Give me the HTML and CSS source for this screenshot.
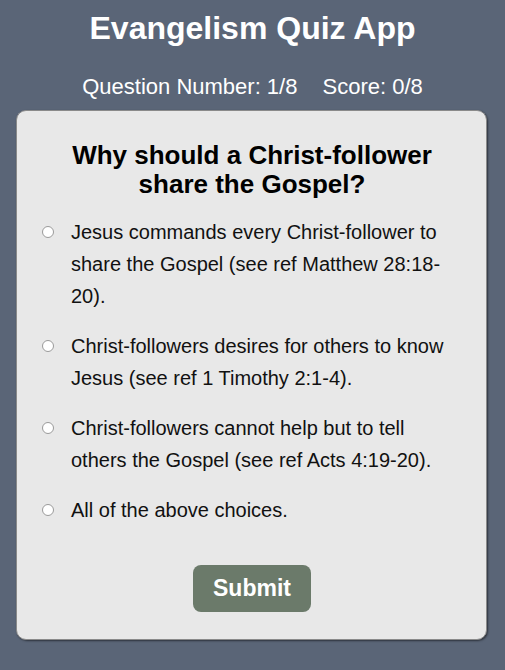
FILE: index.html
```html
<!DOCTYPE html>
<html>
<head>
<meta charset="utf-8">
<link rel="stylesheet" href="styles.css">
</head>
<body>
<h1 class="title">Evangelism Quiz App</h1>
<div class="status"><span>Question Number: 1/8</span><span>Score: 0/8</span></div>
<div class="card">
  <h2 class="question">Why should a Christ-follower share the Gospel?</h2>
  <ul class="options">
    <li class="option"><span class="radio"></span><span class="label">Jesus commands every Christ-follower to share the Gospel (see ref Matthew 28:18-20).</span></li>
    <li class="option"><span class="radio"></span><span class="label">Christ-followers desires for others to know Jesus (see ref 1 Timothy 2:1-4).</span></li>
    <li class="option"><span class="radio"></span><span class="label">Christ-followers cannot help but to tell others the Gospel (see ref Acts 4:19-20).</span></li>
    <li class="option"><span class="radio"></span><span class="label">All of the above choices.</span></li>
  </ul>
  <div class="actions"><button class="submit">Submit</button></div>
</div>
</body>
</html>
```
FILE: styles.css
```css
html, body {
  margin: 0;
  padding: 0;
  background: #5a6577;
  font-family: "Liberation Sans", Arial, sans-serif;
  height: 100%;
}
body {
  padding: 0 16px;
  box-sizing: border-box;
}
.title {
  margin: 0;
  padding-top: 10px;
  font-size: 32px;
  line-height: 37px;
  color: #fff;
  text-align: center;
  font-weight: bold;
}
.status {
  margin-top: 27px;
  display: flex;
  justify-content: center;
  gap: 25px;
  color: #fff;
  font-size: 22px;
  line-height: 25px;
}
.card {
  margin-top: 11px;
  width: 471px;
  box-sizing: border-box;
  background: #e8e8e8;
  border: 1px solid #8a8a8a;
  border-radius: 10px;
  box-shadow: 1px 1px 2px rgba(0,0,0,0.5);
  padding: 30px 24px 27px 25px;
}
.question {
  margin: 0;
  font-size: 26px;
  line-height: 29px;
  text-align: center;
  font-weight: bold;
  color: #000;
}
.options {
  list-style: none;
  margin: 17px 0 0;
  padding: 0;
  display: flex;
  flex-direction: column;
  gap: 18px;
}
.option {
  display: flex;
  align-items: flex-start;
  font-size: 20px;
  line-height: 32px;
  color: #111;
}
.radio {
  flex: none;
  width: 12px;
  height: 12px;
  border-radius: 50%;
  background: #fff;
  border: 1px solid #9a9a9a;
  box-sizing: border-box;
  margin-top: 10px;
  margin-right: 17px;
}
.label {
  flex: 1;
}
.actions {
  display: flex;
  justify-content: center;
  margin-top: 39px;
}
.submit {
  width: 118px;
  height: 47px;
  background: #6b7a6a;
  color: #fff;
  border: none;
  border-radius: 8px;
  font-family: "Liberation Sans", Arial, sans-serif;
  font-weight: bold;
  font-size: 23px;
}
```
